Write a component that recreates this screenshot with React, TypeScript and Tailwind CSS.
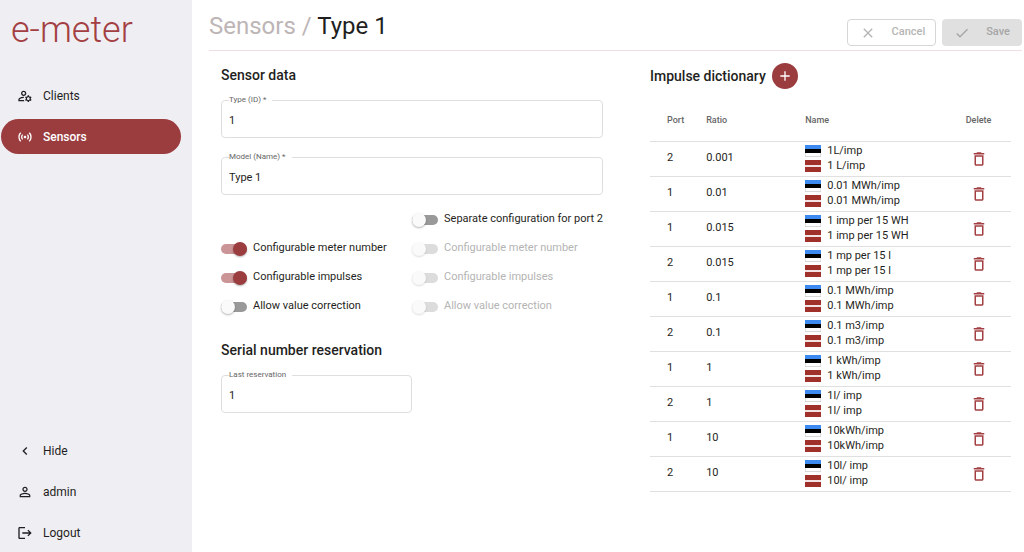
import { useState, type ReactNode } from "react";
import {
  MdAdd,
  MdCheck,
  MdChevronLeft,
  MdClose,
  MdDeleteOutline,
  MdLogout,
  MdOutlineManageAccounts,
  MdPersonOutline,
  MdSensors,
} from "react-icons/md";

type Impulse = { port: number; ratio: string; ee: string; lv: string };

const impulses: Impulse[] = [
  { port: 2, ratio: "0.001", ee: "1L/imp", lv: "1 L/imp" },
  { port: 1, ratio: "0.01", ee: "0.01 MWh/imp", lv: "0.01 MWh/imp" },
  { port: 1, ratio: "0.015", ee: "1 imp per 15 WH", lv: "1 imp per 15 WH" },
  { port: 2, ratio: "0.015", ee: "1 mp per 15 l", lv: "1 mp per 15 l" },
  { port: 1, ratio: "0.1", ee: "0.1 MWh/imp", lv: "0.1 MWh/imp" },
  { port: 2, ratio: "0.1", ee: "0.1 m3/imp", lv: "0.1 m3/imp" },
  { port: 1, ratio: "1", ee: "1 kWh/imp", lv: "1 kWh/imp" },
  { port: 2, ratio: "1", ee: "1l/ imp", lv: "1l/ imp" },
  { port: 1, ratio: "10", ee: "10kWh/imp", lv: "10kWh/imp" },
  { port: 2, ratio: "10", ee: "10l/ imp", lv: "10l/ imp" },
];

function NavItem({ icon, label, active = false }: { icon: ReactNode; label: string; active?: boolean }) {
  return (
    <a
      href="#"
      aria-current={active ? "page" : undefined}
      className={`flex h-[35px] items-center gap-2.5 rounded-full pl-4 text-xs ${
        active ? "bg-[#9b3c3f] font-medium text-white" : "text-[#1f1f22]"
      }`}
    >
      {icon}
      {label}
    </a>
  );
}

function Field({ id, label, value }: { id: string; label: string; value: string }) {
  return (
    <fieldset className="h-[43px] rounded border border-[#dedede] px-[7px]">
      <legend className="h-2.5 px-0">
        <label htmlFor={id} className="block pr-1.5 text-[8px] leading-[10px] text-[#666]">
          {label}
        </label>
      </legend>
      <input
        id={id}
        type="text"
        defaultValue={value}
        className="block h-[30px] w-full bg-transparent text-[11px] text-[#1f1f22] outline-none"
      />
    </fieldset>
  );
}

function Toggle({ label, on = false, disabled = false }: { label: string; on?: boolean; disabled?: boolean }) {
  const [checked, setChecked] = useState(on);
  return (
    <label className={`flex h-[29px] items-center gap-1.5 text-[11px] whitespace-nowrap ${disabled ? "text-[#b4b4b4]" : "text-[#1f1f22]"}`}>
      <input
        type="checkbox"
        role="switch"
        checked={checked}
        disabled={disabled}
        onChange={(e) => setChecked(e.target.checked)}
        className="peer sr-only"
      />
      <span
        className={`flex h-2.5 w-[26px] items-center rounded-full ${
          checked ? "justify-end bg-[#cb9496]" : disabled ? "bg-[#dcdcdc]" : "bg-[#999]"
        }`}
      >
        <span
          className={`size-3.5 shrink-0 rounded-full shadow-[0_1px_2px_rgba(0,0,0,0.3)] ${
            checked ? "bg-[#9b3c3f]" : disabled ? "bg-[#fafafa] shadow-[0_1px_2px_rgba(0,0,0,0.14)]" : "bg-[#fafafa]"
          }`}
        />
      </span>
      {label}
    </label>
  );
}

function FlagEE() {
  return (
    <svg viewBox="0 0 16 12" className="h-3 w-4 shrink-0" role="img" aria-label="Estonian">
      <rect width="16" height="12" fill="#c9c9c9" />
      <rect x="0" width="16" height="4.3" fill="#3d8af0" />
      <rect x="0" y="4" width="16" height="4" fill="#000" />
      <rect x="0.5" y="8" width="15" height="3.3" fill="#fff" />
    </svg>
  );
}

function FlagLV() {
  return (
    <svg viewBox="0 0 16 12" className="h-3 w-4 shrink-0" role="img" aria-label="Latvian">
      <rect width="16" height="12" fill="#a0302a" />
      <rect y="5" width="16" height="2" fill="#f3e3e3" />
    </svg>
  );
}

export default function App() {
  return (
    <div className="flex min-h-screen bg-white font-[Roboto,sans-serif] text-[#1f1f22]">
      <aside className="flex w-48 shrink-0 flex-col bg-[#efeef3] px-px pb-0.5">
        <div className="pt-2.5 pl-2.5 text-[36px] leading-10 font-light text-[#a33f42]">e-meter</div>
        <nav className="mt-7 mr-2.5 flex flex-col gap-1.5">
          <NavItem icon={<MdOutlineManageAccounts className="size-4" />} label="Clients" />
          <NavItem icon={<MdSensors className="size-4" />} label="Sensors" active />
        </nav>
        <nav className="mt-auto mr-2.5 flex flex-col gap-1.5">
          <NavItem icon={<MdChevronLeft className="size-4" />} label="Hide" />
          <NavItem icon={<MdPersonOutline className="size-4" />} label="admin" />
          <NavItem icon={<MdLogout className="size-4" />} label="Logout" />
        </nav>
      </aside>

      <main className="min-w-0 flex-1 pr-0.5 pl-[17px]">
        <header className="flex h-[51px] items-end justify-between border-b border-[#efdfe0] pb-1">
          <h1 className="text-2xl leading-10 whitespace-nowrap">
            <a href="#" className="text-[#bdb5b6]">Sensors /</a> Type 1
          </h1>
          <div className="flex gap-1.5">
            <button
              type="button"
              disabled
              className="flex h-[27px] items-center gap-4 rounded border border-[#d6d6d6] pr-2.5 pl-3 text-[11px] font-medium text-[#b5b5b5]"
            >
              <MdClose className="size-4" />
              Cancel
            </button>
            <button
              type="button"
              disabled
              className="flex h-[27px] items-center gap-4 rounded bg-[#e0e0e0] px-3 text-[11px] font-medium text-[#a6a6a6]"
            >
              <MdCheck className="size-4" />
              Save
            </button>
          </div>
        </header>

        <div className="flex items-start gap-[47px] pr-[11px] pl-3">
          <div className="min-w-0 flex-[382]">
            <h2 className="mt-3 text-sm leading-6 font-medium">Sensor data</h2>
            <div className="mt-2 flex flex-col gap-3.5">
              <Field id="type-id" label="Type (ID) *" value="1" />
              <Field id="model-name" label="Model (Name) *" value="Type 1" />
            </div>
            <div className="mt-2.5 flex justify-between">
              <div className="pt-[29px]">
                <Toggle label="Configurable meter number" on />
                <Toggle label="Configurable impulses" on />
                <Toggle label="Allow value correction" />
              </div>
              <div>
                <Toggle label="Separate configuration for port 2" />
                <Toggle label="Configurable meter number" disabled />
                <Toggle label="Configurable impulses" disabled />
                <Toggle label="Allow value correction" disabled />
              </div>
            </div>
            <h2 className="mt-[17px] text-sm leading-6 font-medium">Serial number reservation</h2>
            <div className="mt-2 w-1/2">
              <Field id="last-reservation" label="Last reservation" value="1" />
            </div>
          </div>

          <section className="min-w-0 flex-[361]">
            <div className="mt-3 flex items-center gap-1.5">
              <h2 className="text-sm leading-6 font-medium">Impulse dictionary</h2>
              <button
                type="button"
                aria-label="Add impulse"
                className="flex size-[26px] items-center justify-center rounded-full bg-[#9b3c3f] text-white"
              >
                <MdAdd className="size-4" />
              </button>
            </div>
            <table className="mt-3 w-full table-fixed border-collapse text-left text-[11px]">
              <thead>
                <tr className="h-10 border-b border-[#e0e0e0] text-[9px] text-[#666]">
                  <th className="w-[15%] pl-[17px] font-medium">Port</th>
                  <th className="w-[28%] pl-0.5 font-medium">Ratio</th>
                  <th className="font-medium">Name</th>
                  <th className="w-[18%] text-center font-medium">Delete</th>
                </tr>
              </thead>
              <tbody>
                {impulses.map((row, i) => (
                  <tr key={i} className="h-[35px] border-b border-[#e0e0e0]">
                    <td className="pl-[17px]">{row.port}</td>
                    <td className="pl-0.5">{row.ratio}</td>
                    <td>
                      <div className="flex h-[15px] items-center gap-1.5 whitespace-nowrap">
                        <FlagEE />
                        {row.ee}
                      </div>
                      <div className="flex h-[15px] items-center gap-1.5 whitespace-nowrap">
                        <FlagLV />
                        {row.lv}
                      </div>
                    </td>
                    <td>
                      <button type="button" aria-label={`Delete ${row.ee}`} className="mx-auto block text-[#a33f42]">
                        <MdDeleteOutline className="size-[18px]" />
                      </button>
                    </td>
                  </tr>
                ))}
              </tbody>
            </table>
          </section>
        </div>
      </main>
    </div>
  );
}
